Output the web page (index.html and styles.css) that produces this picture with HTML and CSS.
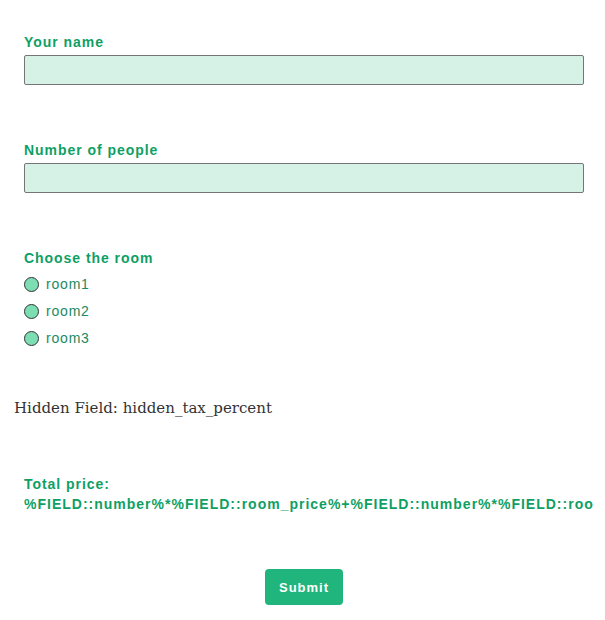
FILE: index.html
```html
<!DOCTYPE html>
<html lang="en">
<head>
  <meta charset="UTF-8">
  <meta name="viewport" content="width=device-width, initial-scale=1.0">
  <title>Room booking</title>
  <link rel="stylesheet" href="styles.css">
</head>
<body>
  <form class="booking-form" onsubmit="return false;">
    <div class="form-field">
      <label class="field-label" for="yourName">Your name</label>
      <input class="text-input" type="text" id="yourName" name="your_name">
    </div>

    <div class="form-field">
      <label class="field-label" for="number">Number of people</label>
      <input class="text-input" type="text" id="number" name="number">
    </div>

    <div class="form-field">
      <div class="field-label">Choose the room</div>
      <div class="radio-list">
        <label class="radio-item"><input type="radio" name="room_price" value="room1"><span class="radio-dot"></span>room1</label>
        <label class="radio-item"><input type="radio" name="room_price" value="room2"><span class="radio-dot"></span>room2</label>
        <label class="radio-item"><input type="radio" name="room_price" value="room3"><span class="radio-dot"></span>room3</label>
      </div>
    </div>

    <!-- hidden field placeholder -->
    <p class="hidden-field">Hidden Field: hidden_tax_percent</p>

    <div class="form-field total-field">
      <div class="field-label">Total price:</div>
      <div class="total-formula">%FIELD::number%*%FIELD::room_price%+%FIELD::number%*%FIELD::room_price%*%FIELD::hidden_tax_percent%/100</div>
    </div>

    <div class="submit-row">
      <button type="submit" class="submit-button">Submit</button>
    </div>
  </form>
</body>
</html>
```

FILE: styles.css
```css
body {
  margin: 0;
  padding: 0;
  background-color: #fff;
  font-family: "Liberation Sans", Arial, sans-serif;
}
.booking-form {
  padding: 23px 11px 0 14px;
}
.form-field {
  padding: 10px 10px;
  overflow: hidden;
  margin-bottom: 36px;
}
.field-label {
  display: block;
  font-size: 14px;
  line-height: 18px;
  font-weight: bold;
  letter-spacing: 0.95px;
  color: #0f9f64;
  margin-bottom: 4px;
}
.text-input {
  display: block;
  box-sizing: border-box;
  width: 100%;
  height: 30px;
  margin: 0;
  border: 1px solid #757575;
  border-radius: 2px;
  background-color: #d6f2e6;
  font-size: 14px;
  padding: 4px 8px;
}
.radio-list {
  display: flex;
  flex-direction: column;
  gap: 9px;
  padding-top: 4px;
}
.radio-item {
  display: flex;
  align-items: center;
  gap: 7px;
  font-size: 14px;
  line-height: 18px;
  letter-spacing: 0.8px;
  color: #1b8a60;
}
.radio-item input {
  display: none;
}
.radio-dot {
  box-sizing: border-box;
  width: 15px;
  height: 15px;
  border: 1.5px solid #333;
  border-radius: 50%;
  background-color: #7ddeb4;
}
.hidden-field {
  margin: 0;
  padding-top: 5px;
  font-family: "DejaVu Serif", serif;
  font-size: 15px;
  line-height: 20px;
  color: #333;
}
.total-field {
  margin-top: 47px;
}
.total-field .field-label {
  margin-bottom: 1px;
}
.total-formula {
  font-size: 14px;
  line-height: 20px;
  font-weight: bold;
  letter-spacing: 1px;
  color: #0f9f64;
  white-space: nowrap;
}
.submit-row {
  display: flex;
  justify-content: center;
  margin-top: 45px;
}
.submit-button {
  height: 36px;
  padding: 0 14px;
  border: none;
  border-radius: 4px;
  background-color: #20b57c;
  color: #fff;
  font-family: "Liberation Sans", Arial, sans-serif;
  font-size: 13px;
  font-weight: bold;
  letter-spacing: 1px;
  cursor: pointer;
}
```
